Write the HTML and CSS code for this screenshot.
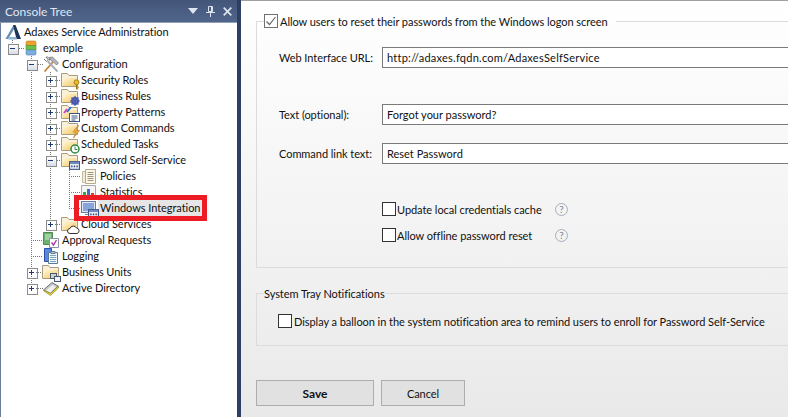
FILE: index.html
```html
<!DOCTYPE html>
<html lang="en">
<head>
<meta charset="utf-8">
<title>Adaxes Service Administration</title>
<link rel="stylesheet" href="styles.css">
</head>
<body>
<svg class="defs" width="0" height="0" aria-hidden="true">
  <defs>
    <linearGradient id="fy" x1="0" y1="0" x2="1" y2="1"><stop offset="0" stop-color="#fff8dc"/><stop offset="1" stop-color="#f4c65c"/></linearGradient>
    <symbol id="folder" viewBox="0 0 17 16">
      <path d="M.5 14.500V1.500h6l1.500 2h8.500v11z" fill="#f8f0d8" stroke="#a89c7c"/>
      <path d="M1.500 6h14v8h-14z" fill="url(#fy)"/>
    </symbol>
    <symbol id="dots" viewBox="0 0 10 8">
      <rect x=".5" y=".5" width="9" height="7" fill="#e8eef8" stroke="#3c5488"/>
      <rect x="1" y="1" width="8" height="1.500" fill="#5b78b4"/>
      <path d="M2 4h1.200v1.500H2zM4.400 4h1.200v1.500H4.400zM6.800 4H8v1.500H6.800z" fill="#2c3f70"/>
    </symbol>
  </defs>
</svg>
<div class="app">
  <aside class="pane">
    <header class="pane-head">
      <span class="pane-title">Console Tree</span>
      <span class="pane-tools">
        <svg width="10" height="6" viewBox="0 0 10 6"><path d="M0 0h10L5 6z" fill="#dfe5ef"/></svg>
        <svg width="9" height="12" viewBox="0 0 9 12"><path d="M2.500 1.500h4v5h-4zM0 7.500h9M4.500 8v4M5.500 2v4" fill="none" stroke="#dfe5ef"/></svg>
        <svg width="9" height="9" viewBox="0 0 9 9"><path d="M.7.700l7.600 7.600M8.300.700L.7 8.300" stroke="#dfe5ef" stroke-width="1.700"/></svg>
      </span>
    </header>
    <div class="tree">
      <svg class="tree-lines" width="237" height="394" viewBox="0 23 237 394" aria-hidden="true">
        <path d="M12.500 38v6M17 48.500h7M31.500 56v232M36 64.500h7M31 240.500h12M31 256.500h12M36 272.500h7M36 288.500h7M50.500 72v152M55 80.500h6M55 96.500h6M55 112.500h6M55 128.500h6M55 144.500h6M55 160.500h6M55 224.500h6M69.500 168v40M69 176.500h12M69 192.500h12M69 208.500h12" fill="none" stroke="#777" stroke-dasharray="1 1"/>
      </svg>
      <div class="row">
        <svg class="ico" viewBox="0 0 16 16"><path d="M8.500 1L.5 15h2.500L9 5z" fill="#5f8cb2"/><path d="M8 1h2.500L16 15h-4.500z" fill="#1d3557"/><path d="M3 15.500h9l-.8-2.500H4.500z" fill="#8fb4d4"/></svg>
        <span class="name">Adaxes Service Administration</span>
      </div>
      <div class="row l1">
        <i class="exp minus"></i>
        <svg class="ico" viewBox="0 0 16 16"><rect x="2" y="1" width="10" height="5" rx="1.500" fill="#f0a030" stroke="#b87818" stroke-width=".6"/><rect x="2" y="5.500" width="10" height="4.500" fill="#6cc04a" stroke="#4d9034" stroke-width=".6"/><rect x="2" y="10" width="10" height="5" rx="1.500" fill="#7eaede" stroke="#4f7fb4" stroke-width=".6"/></svg>
        <span class="name">example</span>
      </div>
      <div class="row l2">
        <i class="exp minus"></i>
        <svg class="ico" viewBox="0 0 16 16"><path d="M1.500 15.500L10 6" stroke="#c9853a" stroke-width="1.800"/><path d="M6.500 1.500l3-.5 6 6-2 2-3-3-2.500-1.500z" fill="#b4b8be" stroke="#666a70" stroke-width=".7"/><path d="M14.500 15.500L5 5.500" stroke="#a8acb2" stroke-width="2"/><path d="M1 3l2.500 2.500L5.500 4 3 1.200C5 .5 7 2 6.500 4.500" fill="none" stroke="#70747a"/></svg>
        <span class="name">Configuration</span>
      </div>
      <div class="row l3">
        <i class="exp plus"></i>
        <span class="ico-stack"><svg class="folder"><use href="#folder"/></svg><svg class="badge" viewBox="0 0 8 12" width="7" height="11"><circle cx="4" cy="3.500" r="2.800" fill="#e8bc30" stroke="#a07c10"/><path d="M4 6v5.500M4 9h2.500M4 11h2" stroke="#a07c10" stroke-width="1.300"/></svg></span>
        <span class="name">Security Roles</span>
      </div>
      <div class="row l3">
        <i class="exp plus"></i>
        <span class="ico-stack"><svg class="folder"><use href="#folder"/></svg><svg class="badge" viewBox="0 0 10 10" width="10" height="10"><circle cx="5" cy="5" r="3" fill="none" stroke="#4a58b0" stroke-width="2"/><path d="M5 0v10M0 5h10M1.500 1.500l7 7M8.500 1.500l-7 7" stroke="#4a58b0" stroke-width="1.200"/></svg></span>
        <span class="name">Business Rules</span>
      </div>
      <div class="row l3">
        <i class="exp plus"></i>
        <span class="ico-stack"><svg class="folder"><use href="#folder"/></svg><svg class="badge tl" viewBox="0 0 9 8" width="9" height="8"><path d="M1 7l3-4" stroke="#d04cc0" stroke-width="2"/><path d="M4 6l4-5" stroke="#3470c8" stroke-width="2"/></svg><svg class="badge" viewBox="0 0 11 9" width="11" height="9"><rect x=".5" y=".5" width="10" height="8" fill="#fff" stroke="#3c5488"/><path d="M2.500 3h6M2.500 5h6M2.500 7h4" stroke="#3c5488"/></svg></span>
        <span class="name">Property Patterns</span>
      </div>
      <div class="row l3">
        <i class="exp plus"></i>
        <span class="ico-stack"><svg class="folder"><use href="#folder"/></svg><svg class="badge" viewBox="0 0 8 13" width="8" height="13"><path d="M6.500 0L1 7h3L1.500 13 7.500 5.500h-3z" fill="#f0b840" stroke="#c07828" stroke-width=".7"/></svg></span>
        <span class="name">Custom Commands</span>
      </div>
      <div class="row l3">
        <i class="exp plus"></i>
        <span class="ico-stack"><svg class="folder"><use href="#folder"/></svg><svg class="badge" viewBox="0 0 10 10" width="10" height="10"><circle cx="5" cy="5" r="4" fill="#fff" stroke="#2e8c3e" stroke-width="1.500"/><path d="M5 2.500V5.500H7.500" fill="none" stroke="#2e8c3e"/></svg></span>
        <span class="name">Scheduled Tasks</span>
      </div>
      <div class="row l3">
        <i class="exp minus"></i>
        <span class="ico-stack"><svg class="folder"><use href="#folder"/></svg><svg class="badge" width="11" height="9"><use href="#dots"/></svg></span>
        <span class="name">Password Self-Service</span>
      </div>
      <div class="row l4">
        <i class="slot"></i>
        <svg class="ico" viewBox="0 0 16 16"><path d="M1.500 3.500h3v11h-3z" fill="#f2ead8" stroke="#c8bc9c"/><path d="M4.500 1.500h10v14h-10z" fill="#fbf7ec" stroke="#b8aa88"/><path d="M6.500 4.500h6M6.500 6.500h6M6.500 8.500h6M6.500 10.500h6M6.500 12.500h6" stroke="#a09478"/></svg>
        <span class="name">Policies</span>
      </div>
      <div class="row l4">
        <i class="slot"></i>
        <svg class="ico" viewBox="0 0 16 16"><path d="M.500 1.500h14v14H.500z" fill="#f4f4f4" stroke="#a8a8a8"/><path d="M2 8h3v7H2z" fill="#40a048"/><path d="M6 5h3v10H6z" fill="#3870c8"/><path d="M10 9h3v6h-3z" fill="#d84030"/></svg>
        <span class="name">Statistics</span>
      </div>
      <div class="row l4 selected">
        <i class="slot"></i>
        <span class="ico-stack"><svg class="ico" viewBox="0 0 16 16"><rect x=".500" y="1.500" width="14" height="11" fill="#dfe7f5" stroke="#6b7a9c"/><rect x="2" y="3" width="11" height="8" fill="#88a4d8"/><path d="M4 14.500h7" stroke="#7a88a4"/></svg><svg class="badge" width="11" height="9"><use href="#dots"/></svg></span>
        <span class="name">Windows Integration</span>
      </div>
      <div class="row l3">
        <i class="exp plus"></i>
        <span class="ico-stack"><svg class="folder"><use href="#folder"/></svg><svg class="badge" viewBox="0 0 13 9" width="13" height="9"><path d="M3 8.500a2.500 2.500 0 0 1 0-5A3.500 3.500 0 0 1 9.500 3 2.800 2.800 0 0 1 10 8.500z" fill="#fff" stroke="#333"/></svg></span>
        <span class="name">Cloud Services</span>
      </div>
      <div class="row l2">
        <i class="slot"></i>
        <svg class="ico" viewBox="0 0 16 16"><path d="M.500.500h9v12h-9z" fill="#6eb070" stroke="#4c8c50"/><path d="M2 3h6M2 5h6M2 7h6" stroke="#d4ecd4"/><path d="M6.500 6.500h9v9h-9z" fill="#fff" stroke="#8b8fa8"/><path d="M8.500 10.500l2 2.500 3-5" fill="none" stroke="#b030a8" stroke-width="1.300"/></svg>
        <span class="name">Approval Requests</span>
      </div>
      <div class="row l2">
        <i class="slot"></i>
        <svg class="ico" viewBox="0 0 16 16"><path d="M1.500.500h7v13h-7z" fill="#5a88e0" stroke="#2c50a8"/><path d="M5.500 4.500h9v11h-9z" fill="#eef6fa" stroke="#5a7a96"/><path d="M8 3.500h4v2H8z" fill="#c8ccd4" stroke="#5a7a96"/><path d="M7 7.500h6M7 9.500h6M7 11.500h6M7 13.500h6" stroke="#7ca4c4"/></svg>
        <span class="name">Logging</span>
      </div>
      <div class="row l2">
        <i class="exp plus"></i>
        <span class="ico-stack"><svg class="folder"><use href="#folder"/></svg><svg class="badge" viewBox="0 0 11 9" width="11" height="9"><rect x=".5" y=".5" width="6" height="5" fill="#c8d0dc" stroke="#48566c"/><rect x="4.500" y="3.500" width="6" height="5" fill="#eef1f6" stroke="#48566c"/></svg></span>
        <span class="name">Business Units</span>
      </div>
      <div class="row l2">
        <i class="exp plus"></i>
        <svg class="ico" viewBox="0 0 16 16"><path d="M.500 10L9 2.500l6 3.500-7.500 7.500z" fill="#c4c8cc" stroke="#6c7074"/><path d="M3 10.500L9.500 5l3.500 2-6 5.500z" fill="#eef0f2"/><path d="M1 11l6.500 4.500L15.500 8v-2L7.500 13.500 1 10z" fill="#f2dc3c" stroke="#8c8420" stroke-width=".7"/></svg>
        <span class="name">Active Directory</span>
      </div>
      <div class="callout"></div>
    </div>
  </aside>
  <div class="splitter"></div>
  <main class="main">
    <fieldset class="group first">
      <legend class="legend-check">
        <span class="check"><svg width="12" height="12" viewBox="0 0 12 12"><path d="M1.500 6.500l3 3 6-7.500" fill="none" stroke="#666" stroke-width="1.200"/></svg></span>
        <span>Allow users to reset their passwords from the Windows logon screen</span>
      </legend>
      <div class="field url">
        <span class="field-label">Web Interface URL:</span>
        <input class="text" type="text" value="http://adaxes.fqdn.com/AdaxesSelfService">
      </div>
      <div class="field optional">
        <span class="field-label">Text (optional):</span>
        <input class="text" type="text" value="Forgot your password?">
      </div>
      <div class="field command">
        <span class="field-label">Command link text:</span>
        <input class="text" type="text" value="Reset Password">
      </div>
      <div class="opts">
        <div class="opt">
          <span class="check"></span><span>Update local credentials cache</span>
          <span class="help">?</span>
        </div>
        <div class="opt second">
          <span class="check"></span><span>Allow offline password reset</span>
          <span class="help">?</span>
        </div>
      </div>
    </fieldset>
    <fieldset class="group tray">
      <legend class="legend-plain">System Tray Notifications</legend>
      <div class="balloon">
        <span class="check"></span>
        <span>Display a balloon in the system notification area to remind users to enroll for Password Self-Service</span>
      </div>
    </fieldset>
    <div class="actions">
      <button class="btn save" type="button">Save</button>
      <button class="btn cancel" type="button">Cancel</button>
    </div>
  </main>
</div>
</body>
</html>
```
FILE: styles.css
```css
* { box-sizing: border-box; }
html, body { margin: 0; height: 100%; overflow: hidden; }
body {
  font-family: "Lato", "Open Sans", sans-serif;
  font-size: 11px;
  letter-spacing: -.05px;
  color: #111;
  background: #fff;
  white-space: nowrap;
}
.defs { position: absolute; }
.app { display: flex; width: 788px; height: 417px; overflow: hidden; }

/* Console tree pane */
.pane { width: 237px; flex: none; display: flex; flex-direction: column; background: #fff; border-left: 1px solid #6a7c99; }
.pane-head {
  height: 23px; flex: none; margin-left: -1px;
  display: flex; align-items: center; justify-content: space-between;
  padding: 0 5px 0 5px;
  background: linear-gradient(#43567a, #51658b);
  border-bottom: 1px solid #8f9fb8;
  color: #dfe6f0;
  font-size: 12px;
}
.pane-tools { display: flex; align-items: center; gap: 8px; }
.tree { position: relative; flex: 1; padding-top: 1px; margin-left: -1px; }
.tree-lines { position: absolute; left: 0; top: 0; }
.row { position: relative; display: flex; align-items: center; height: 16px; padding-left: 5px; }
.row.l1 { padding-left: 5px; }
.row.l2 { padding-left: 24px; }
.row.l3 { padding-left: 43px; }
.row.l4 { padding-left: 62px; }
.exp, .slot { display: block; flex: none; width: 19px; height: 9px; }
.exp { position: relative; }
.exp::before { content: ""; position: absolute; left: 3px; top: 0; width: 9px; height: 9px; border: 1px solid #8b8b8b; background: linear-gradient(#fff, #d8dde6); }
.minus::after, .plus::after { content: ""; position: absolute; left: 5px; top: 4px; width: 5px; height: 1px; background: #1f3a6e; }
.plus { background: linear-gradient(#1f3a6e, #1f3a6e) 7px 2px / 1px 5px no-repeat; }
.plus::before { background: transparent; }
.ico { display: block; width: 16px; height: 16px; flex: none; }
.ico-stack { position: relative; display: block; width: 16px; height: 16px; flex: none; }
.folder { display: block; width: 17px; height: 16px; margin-left: -1px; }
.badge { position: absolute; right: -2px; bottom: -2px; display: block; }
.badge.tl { left: 1px; right: auto; top: 2px; bottom: auto; }
.name { margin-left: 1px; padding: 0 2px; line-height: 16px; }
.selected .name { background: #e6e6e6; }
.callout { position: absolute; left: 74px; top: 172px; width: 133px; height: 26px; border: 5px solid #ed1c24; }

.splitter { width: 4px; flex: none; background: #2d4063; }

/* Main form */
.main {
  flex: 1; min-width: 0; overflow: hidden;
  padding: 12px 0 0 15px;
  background: linear-gradient(#fff, #e9e9e9);
  border-top: 1px solid #a0a0a0;
}
.group { margin: 0 -20px 0 0; padding: 0; border: 1px solid #dcdcdc; min-width: 0; }
.group.first { height: 255px; padding-left: 22px; }
.legend-check { display: flex; align-items: center; gap: 2px; margin-left: -15px; padding: 0 8px 0 0; height: 16px; }
.check { display: block; flex: none; width: 14px; height: 14px; background: #fff; border: 1px solid #333; }
.check svg { display: block; }
.legend-check .check { border-color: #707070; }
.field { display: grid; grid-template-columns: 103px 1fr; align-items: center; height: 21px; }
.field.url { margin-top: 18px; }
.field.optional { margin-top: 36px; }
.field.command { margin-top: 18px; }
.text {
  display: block; width: 100%; height: 21px; margin: 0; padding: 0 4px;
  font: inherit; letter-spacing: 0; color: inherit; background: #fff;
  border: 1px solid #7a7a7a; border-radius: 0;
}
.url .text { letter-spacing: .25px; }
.opts { margin: 38px 0 0 103px; }
.opt { display: grid; grid-template-columns: 15px 158px 13px; align-items: center; height: 14px; }
.opt.second { margin-top: 12px; }
.help {
  width: 13px; height: 13px;
  border: 1px solid #a3b0bc; border-radius: 50%;
  color: #76879a; font-size: 10px; line-height: 11px; text-align: center;
}
.group.tray { margin-top: 18px; height: 60px; }
.legend-plain { margin-left: 7px; padding: 0; line-height: 15px; }
.balloon { display: flex; align-items: center; gap: 2px; margin: 13px 0 0 21px; height: 14px; }
.actions { display: flex; gap: 7px; margin-top: 34px; }
.btn {
  height: 26px; padding: 0; font: inherit; letter-spacing: inherit; color: inherit;
  background: #e1e1e1; border: 1px solid #adadad; border-radius: 0;
}
.save { width: 118px; font-weight: 700; font-size: 12px; }
.cancel { width: 84px; }
```
